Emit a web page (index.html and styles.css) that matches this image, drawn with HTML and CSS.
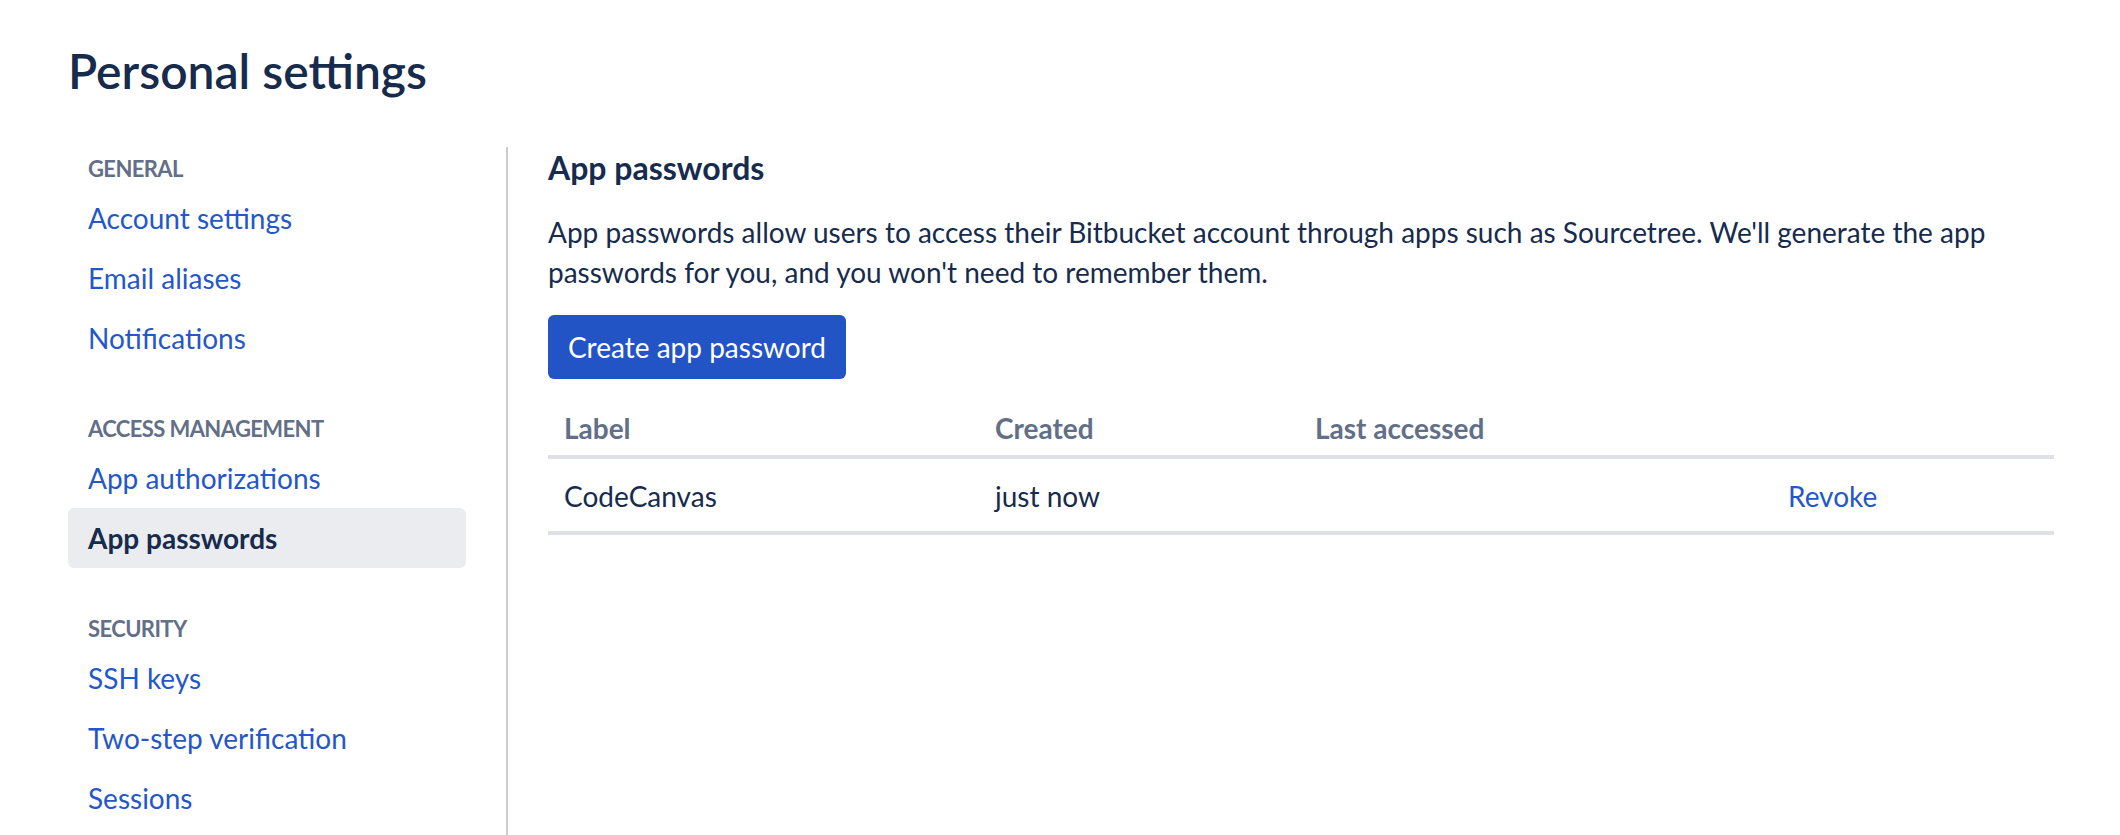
FILE: index.html
```html
<!DOCTYPE html>
<html lang="en">
<head>
<meta charset="utf-8">
<title>Personal settings</title>
<link rel="stylesheet" href="styles.css">
</head>
<body>
<div class="page">
  <h1 class="page-title">Personal settings</h1>
  <div class="layout">
    <nav class="sidebar">
      <div class="nav-section">
        <div class="nav-heading">General</div>
        <a class="nav-item" href="#">Account settings</a>
        <a class="nav-item" href="#">Email aliases</a>
        <a class="nav-item" href="#">Notifications</a>
      </div>
      <div class="nav-section">
        <div class="nav-heading">Access management</div>
        <a class="nav-item" href="#">App authorizations</a>
        <a class="nav-item nav-item-active" href="#">App passwords</a>
      </div>
      <div class="nav-section">
        <div class="nav-heading">Security</div>
        <a class="nav-item" href="#">SSH keys</a>
        <a class="nav-item" href="#">Two-step verification</a>
        <a class="nav-item" href="#">Sessions</a>
      </div>
    </nav>
    <main class="content">
      <h2 class="section-title">App passwords</h2>
      <p class="description">App passwords allow users to access their Bitbucket account through apps such as Sourcetree. We'll generate the app passwords for you, and you won't need to remember them.</p>
      <button class="btn-primary" type="button">Create app password</button>
      <table class="pw-table">
        <colgroup>
          <col class="col-label">
          <col class="col-created">
          <col class="col-accessed">
          <col class="col-actions">
        </colgroup>
        <thead>
          <tr>
            <th>Label</th>
            <th>Created</th>
            <th>Last accessed</th>
            <th></th>
          </tr>
        </thead>
        <tbody>
          <tr>
            <td>CodeCanvas</td>
            <td>just now</td>
            <td></td>
            <td><a class="link" href="#">Revoke</a></td>
          </tr>
        </tbody>
      </table>
    </main>
  </div>
</div>
</body>
</html>
```

FILE: styles.css
```css
* { box-sizing: border-box; }

html, body {
  margin: 0;
  padding: 0;
  background: #ffffff;
}

body {
  font-family: Lato, "Liberation Sans", Arial, sans-serif;
  color: #172b4d;
  overflow: hidden;
}

.page {
  display: flex;
  flex-direction: column;
  height: 100vh;
  padding: 0 66px 0 68px;
}

.page-title {
  margin: 43px 0 48px;
  font-size: 48px;
  line-height: 56px;
  font-weight: 600;
  color: #172b4d;
}

.layout {
  display: flex;
  flex: 1;
  min-height: 0;
}

.sidebar {
  width: 440px;
  flex: none;
  padding: 6px 40px 0 0;
  border-right: 2px solid #c9ccd3;
}

.nav-section {
  display: flex;
  flex-direction: column;
  margin-bottom: 45px;
}

.nav-heading {
  padding: 0 20px;
  margin-bottom: 3px;
  font-size: 22px;
  line-height: 32px;
  font-weight: 700;
  letter-spacing: -0.6px;
  text-transform: uppercase;
  color: #626f86;
}

.nav-item {
  display: block;
  height: 60px;
  padding: 10px 20px;
  font-size: 28px;
  line-height: 40px;
  color: #2457c9;
  text-decoration: none;
  border-radius: 6px;
}

.nav-item-active {
  background: #ebecf0;
  color: #172b4d;
  font-weight: 700;
}

.content {
  flex: 1;
  min-width: 0;
  padding: 1px 0 0 40px;
}

.section-title {
  margin: 0;
  font-size: 32px;
  line-height: 40px;
  font-weight: 700;
  color: #172b4d;
}

.description {
  margin: 24px 0 23px;
  font-size: 28px;
  line-height: 40px;
  color: #172b4d;
}

.btn-primary {
  display: block;
  height: 64px;
  padding: 0 20px;
  border: 0;
  border-radius: 6px;
  background: #2354c5;
  color: #ffffff;
  font-family: inherit;
  font-size: 28px;
  line-height: 64px;
}

.pw-table {
  width: 100%;
  margin-top: 20px;
  border-collapse: collapse;
  table-layout: fixed;
}

.col-label { width: 431px; }
.col-created { width: 320px; }
.col-accessed { width: 473px; }

.pw-table th {
  padding: 9px 16px 7px;
  text-align: left;
  font-size: 28px;
  line-height: 40px;
  font-weight: 700;
  color: #626f86;
  border-bottom: 4px solid #dfe1e6;
}

.pw-table td {
  padding: 17px 16px 15px;
  font-size: 28px;
  line-height: 40px;
  color: #172b4d;
  border-bottom: 4px solid #dfe1e6;
}

.link {
  color: #2457c9;
  text-decoration: none;
}
```
